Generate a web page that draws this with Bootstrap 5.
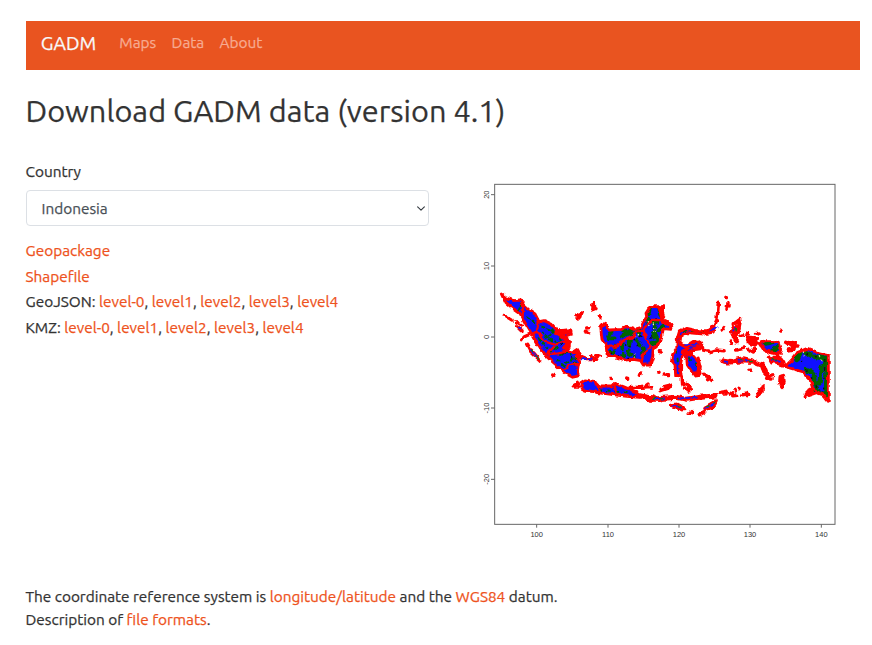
<!DOCTYPE html>
<html lang="en">
<head>
<meta charset="utf-8">
<meta name="viewport" content="width=device-width, initial-scale=1">
<title>GADM</title>
<link href="https://cdn.jsdelivr.net/npm/bootstrap@5.3.0/dist/css/bootstrap.min.css" rel="stylesheet">
<style>
html{font-size:15.36px}
body{font-family:Ubuntu,"Noto Sans",sans-serif;color:#333;overflow:hidden;-webkit-text-stroke:.25px}
a{color:#ee5220;text-decoration:none}
.page{width:834.8px;margin-left:25.5px;padding-top:21.3px}
.topbar{background:#e95420;height:48.3px;padding:0 1rem 5px}
.topbar .navbar-brand{font-size:1.25rem}
.topbar .nav-link{color:#f7ab91}
.title{font-size:30.68px;line-height:36px;margin:23px 0 0;font-weight:400;white-space:nowrap}
.content{margin-top:31px;height:418.7px}
.picker{width:403px}
.form-select{height:36px;padding:0 1rem 0 15px;border-color:#dce0e5;color:#495057;border-radius:4px;background-position:right 2px center;background-size:10px 9px}
.downloads{line-height:25.7px;margin-top:11.5px}
.plot{display:block;width:390px;height:380px;margin:10.2px 0 0 41.5px;flex:none;-webkit-text-stroke:0}
.crs,.formats{line-height:22.8px}
</style>
</head>
<body>
<div class="page">
<nav class="navbar navbar-expand topbar" data-bs-theme="dark">
<a class="navbar-brand py-0" href="#">GADM</a>
<div class="navbar-nav"><a class="nav-link" href="#">Maps</a><a class="nav-link" href="#">Data</a><a class="nav-link" href="#">About</a></div>
</nav>
<h1 class="title">Download GADM data (version 4.1)</h1>
<main class="content d-flex">
<section class="picker">
<label class="d-block mb-2" for="country">Country</label>
<select id="country" class="form-select"><option>Indonesia</option></select>
<div class="downloads">
<div><a href="#">Geopackage</a></div>
<div><a href="#">Shapefile</a></div>
<div>GeoJSON: <a href="#">level-0</a>, <a href="#">level1</a>, <a href="#">level2</a>, <a href="#">level3</a>, <a href="#">level4</a></div>
<div>KMZ: <a href="#">level-0</a>, <a href="#">level1</a>, <a href="#">level2</a>, <a href="#">level3</a>, <a href="#">level4</a></div>
</div>
</section>
<svg class="plot" viewBox="0 0 1170 1140" role="img" aria-label="Map of Indonesia">
<defs>
<filter id="rough" color-interpolation-filters="sRGB" x="0" y="0" width="1170" height="1140" filterUnits="userSpaceOnUse"><feTurbulence type="fractalNoise" baseFrequency=".06" numOctaves="2" seed="4"/><feDisplacementMap in="SourceGraphic" scale="13" xChannelSelector="R" yChannelSelector="G"/></filter>
<path id="sumatra" d="M94 372 106 383 130 392 150 390 160 404 175 418 195 432 207 455 222 452 245 462 262 482 300 480 304 492 282 500 298 512 298 530 290 545 310 545 322 538 335 560 318 558 326 575 322 605 326 618 308 622 290 612 262 588 230 560 205 525 185 492 165 458 150 430 125 412 105 395Z"/>
<path id="borneo" d="M392 473 404 460 418 480 455 478 470 468 490 478 512 472 530 440 528 430 540 410 582 410 578 430 575 450 600 458 603 478 580 476 572 515 550 535 548 560 540 585 520 585 512 572 490 568 465 570 435 560 415 560 412 530 396 508Z"/>
<path id="java" d="M332 638 345 630 372 634 390 648 425 648 432 640 460 650 480 658 503 667 510 682 470 679 430 674 385 668 342 660Z"/>
<path id="papua" d="M945 590 965 570 982 548 1000 540 1012 535 1035 544 1052 552 1075 557 1075 694 1058 674 1040 668 1005 680 1018 660 1028 655 1020 628 1000 606Z"/>
<path id="head" d="M870 520 885 512 908 512 925 520 932 540 926 552 900 548 882 538Z"/>
<path id="sulawesi" d="M622 505 628 485 648 475 680 482 712 482 735 465 730 486 700 492 650 488 632 500 630 520 650 530 668 522 690 515 697 536 665 540 651 548 672 560 684 582 692 616 674 618 652 585 650 565 638 553 632 580 632 616 617 618 615 584 605 572 608 553 620 538Z"/>
<clipPath id="land"><use href="#sumatra"/><use href="#borneo"/><use href="#java"/><use href="#papua"/><use href="#head"/><use href="#sulawesi"/></clipPath>
</defs>
<g fill="none" stroke="#666" stroke-width="3">
<rect x="74" y="43" width="1021" height="1020"/>
<path d="M63 74h11M63 288h11M63 501h11M63 714h11M63 928h11M200 1063v10M414 1063v10M627 1063v10M840 1063v10M1054 1063v10"/>
</g>
<g font-family="Liberation Sans,Arial,sans-serif" font-size="22.5" fill="#333" text-anchor="middle">
<text x="200" y="1100">100</text><text x="414" y="1100">110</text><text x="627" y="1100">120</text><text x="840" y="1100">130</text><text x="1054" y="1100">140</text>
<text transform="translate(57 74) rotate(-90)">20</text><text transform="translate(57 288) rotate(-90)">10</text><text transform="translate(57 501) rotate(-90)">0</text><text transform="translate(57 714) rotate(-90)">-10</text><text transform="translate(57 928) rotate(-90)">-20</text>
</g>
<g filter="url(#rough)" stroke-linejoin="round" stroke-linecap="round">
<g fill="#1010ff"><use href="#sumatra"/><use href="#borneo"/><use href="#java"/><use href="#papua"/><use href="#head"/><use href="#sulawesi"/></g>
<g clip-path="url(#land)" fill="none" stroke="#006400">
<path stroke-width="6" stroke-dasharray="8 10" d="M215 470 245 480 275 500 265 518 232 505 218 488M248 478 235 500 250 520M240 545 270 530M270 555 300 545 310 565 285 580M262 570 285 590M318 560 312 590M155 398 145 425M175 440 195 462M205 505 232 535"/>
<path stroke-width="11" stroke-dasharray="18 13" d="M540 415 532 460 565 455M568 415 570 440M460 480 490 490 455 500 490 475M505 478 510 500M420 545 430 550 435 530M455 520 460 560M480 510 475 550 495 560M500 510 518 530 520 560M555 455 548 520 565 515M580 470 555 490 565 510M425 485 410 505 440 505"/>
<path stroke-width="14" stroke-dasharray="22 12" d="M990 550 980 570M1005 545 1030 560 1068 565 1065 590M1070 600 1068 680 1050 668M1010 600 1030 610 1035 640 1045 665M1015 665 1030 660M1055 590 1048 640M885 520 910 516M908 545 925 530"/>
<path stroke-width="6" stroke-dasharray="8 18" d="M640 482 700 488M650 520 690 525M640 545 680 590M620 540 625 590M385 658 480 670"/>
</g>
<g fill="none" stroke="#101010" stroke-width="5" stroke-dasharray="1 27"><path d="M420 550 455 560 490 565 510 495 460 530 500 530 535 455 560 440 540 510M1010 600 1040 650 1060 675 1065 570 1010 550 990 580M280 550 320 570M270 495 278 560"/></g>
<g fill="none" stroke="#f5e9b5" stroke-width="4" stroke-dasharray="2 9"><path d="M495 500 512 490M532 455 540 475M550 462 552 485M494 550 495 566M1000 545 1005 558M1048 560 1055 575M318 560 320 570"/></g>
<g fill="none" stroke="red" stroke-width="8.5">
<use href="#sumatra"/><use href="#borneo"/><use href="#java"/><use href="#papua"/><use href="#head"/><use href="#sulawesi"/>
<path stroke-width="7" d="M160 404 158 438M207 455 200 485 185 492M200 485 225 515 258 525 275 515 300 518M258 525 232 550M235 552 265 550 290 545M280 600 295 585 325 582M382 640 386 664M432 642 440 668M412 530 440 530 455 515 490 500 495 485 520 482 532 462 548 450 575 450M520 482 530 510 545 530 520 550 515 575M945 590 935 570 920 560 932 552M1028 655 1045 665"/>
<path stroke-width="15" d="M260 488 300 483M280 500 298 515 285 536M262 485 278 498M580 455 600 462M570 415 578 440M675 530 692 520M685 585 690 610 674 608M1012 672 1024 664M640 548 665 552M330 562 320 545"/>
<path stroke-width="10" d="M103 436 126 450M138 455 155 465M141 470 153 482M155 510 163 500 180 493M170 523 180 542 212 572M184 540 205 565M248 615 252 616M322 640 310 648 330 648M335 560 350 566 365 565 380 568M365 558 370 572M380 560 388 558M320 434 330 438 334 428M324 447 330 440M365 405 370 403 368 420 378 416M373 400 374 412M388 440 393 446M350 474 358 473M346 484 356 488M420 625 425 626M470 624 473 625M480 652 515 652 534 650 545 651M530 645 534 642M508 616 511 609M563 608 567 610M583 612 596 614M568 545 574 546M570 662 590 655 605 648M585 649 600 645"/>
<path stroke-width="15" d="M502 676 525 680 545 688 590 684 620 682 650 688 690 682 705 680 738 678"/>
<path stroke-width="15" d="M610 706 633 713M708 716 732 700M762 574 775 576M795 572 845 573M792 475 798 510M842 518 856 520M878 585 888 610M905 568 930 578M934 622 937 646M808 455 802 485"/>
<path stroke-width="10.5" d="M500 678 550 681M523 687 570 691M605 705 622 703 642 715M622 710 635 719M655 732 658 729M666 725 668 728M688 734 700 728 712 708 738 693M705 718 728 712 738 695M636 616 638 645 649 640 665 657M644 655 655 660M638 545 673 515 692 520 700 540 720 545 735 540 762 542M665 520 695 535M684 565 690 590M703 613 713 620 725 631M713 629 718 620M735 462 741 449 743 425 745 400M768 382 769 383M774 398 771 418 777 408M757 480 762 473M790 464 809 449 806 475 790 500 799 515M785 482 791 472 792 505 805 514M790 490 800 488M828 490 835 491M813 496 817 495M830 510 862 506M830 502 850 503M832 515 848 512 862 520M860 490 864 492M845 520 855 525M836 538 850 546 853 536M783 516 784 518M800 540 823 534M932 482 933 483M947 517 965 528 984 528M958 517 973 519M955 540 972 537M895 560 905 578 925 570M915 562 935 587 948 588M930 565 938 577M757 570 770 577 782 572M790 570 820 564 845 570 858 580M780 578 820 574 845 576M855 580 875 588 884 610 895 620 908 617M890 625 903 627M837 598 841 598M931 620 940 617 942 638 936 652 929 638ZM936 620V650M752 667 772 664 768 672M780 670 786 671M795 661 796 663M808 655 810 656M788 677 803 676M818 674 829 672M834 668 836 669M832 677 836 676M861 672 870 660 879 648M861 677 876 666 876 650"/>
</g>
<g fill="none" stroke="#1515ff" stroke-width="5" stroke-dasharray="14 7"><path d="M145 473 149 478M182 540 202 562M335 568 365 565M555 688 582 685M625 685 685 683M610 706 633 713M705 716 732 700M762 574 775 576M805 572 845 573M740 470 725 482M670 525 685 522M790 485 798 471M905 570 930 575M645 525 672 524"/></g>
<g fill="none" stroke="#197019" stroke-width="4" stroke-dasharray="8 16"><path d="M185 540 205 565M548 685 590 686M625 708 640 716M710 710 735 697M800 475 797 490M815 571 850 575M910 565 925 580"/></g>
</g>
</svg>
</main>
<footer class="pt-2"><div class="crs">The coordinate reference system is <a href="#">longitude/latitude</a> and the <a href="#">WGS84</a> datum.</div><div class="formats">Description of <a href="#">file formats</a>.</div></footer>
</div>
<script src="https://cdn.jsdelivr.net/npm/bootstrap@5.3.0/dist/js/bootstrap.bundle.min.js"></script>
</body>
</html>
